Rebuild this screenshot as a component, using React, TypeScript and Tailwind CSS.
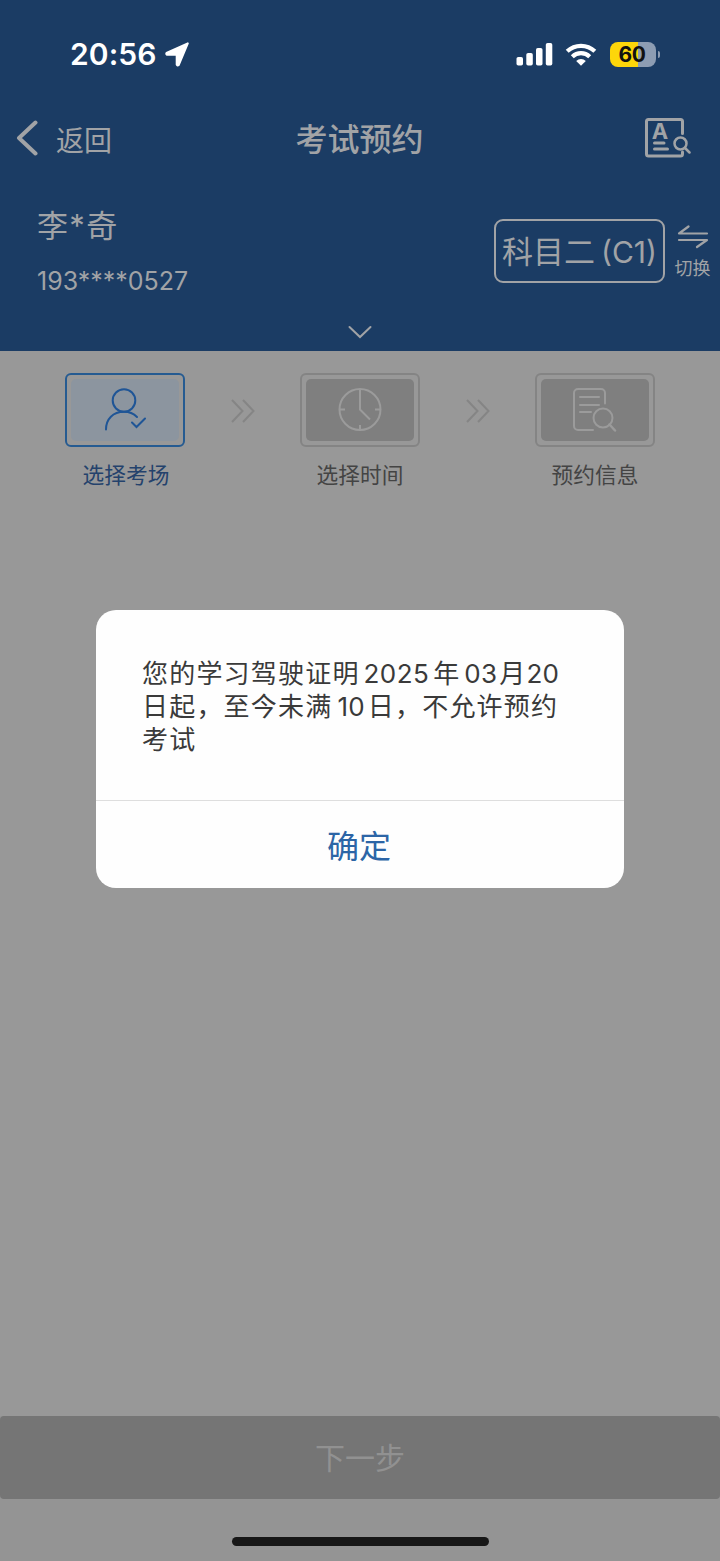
import type { ReactNode } from 'react';

const STEPS = [
  { label: '选择考场', icon: <ExamineeIcon />, active: true },
  { label: '选择时间', icon: <ClockIcon />, active: false },
  { label: '预约信息', icon: <DocSearchIcon />, active: false },
];

function ExamineeIcon() {
  return (
    <svg width="42" height="46" viewBox="0 0 42 46" fill="none" stroke="#1f5596" strokeWidth="2" strokeLinecap="round">
      <circle cx="20" cy="13.5" r="11.3" />
      <path d="M2 42.5C2 32 9 24.8 20 24.8C25 24.8 30 27 33 30" />
      <path d="M28 35.500L32.500 40L41 31.500" />
    </svg>
  );
}

function ClockIcon() {
  return (
    <svg width="44" height="44" viewBox="0 0 44 44" fill="none" stroke="#9b9b9b" strokeWidth="2">
      <circle cx="22" cy="21.5" r="20.5" />
      <path d="M22 1V21.500L32 31.500M22 37V42.500M1.500 21.500H7M37 21.500H42.500" />
    </svg>
  );
}

function DocSearchIcon() {
  return (
    <svg width="44" height="44" viewBox="0 0 44 44" fill="none" stroke="#9b9b9b" strokeWidth="2" strokeLinecap="round">
      <path d="M20 42H5A4 4 0 0 1 1 38V5A4 4 0 0 1 5 1H28A4 4 0 0 1 32 5V15.500" />
      <path d="M7 9H26M7 17H26M7 24H18" />
      <circle cx="30" cy="30" r="9.500" />
      <path d="M36.500 36.500L42 42.500" strokeWidth="2.500" />
    </svg>
  );
}

function StatusBar() {
  return (
    <div className="flex h-[108px] items-center justify-between pl-[70px] pr-[60px]">
      <div className="flex items-center gap-[8px] text-white">
        <span className="text-[30px] font-semibold leading-none tracking-[0.100px]">20:56</span>
        <svg width="25" height="25" viewBox="0 0 25 25" fill="#fff" stroke="#fff" strokeWidth="2" strokeLinejoin="round">
          <path d="M22.800 1.300L1.500 11Q.8 12.200 2 12.800H11.700V22.500Q12.500 24.200 13.700 23Z" />
        </svg>
      </div>
      <div className="flex items-center">
        <svg width="37" height="24" viewBox="0 0 37 24" fill="#fff">
          <rect x="0.500" y="15" width="6.500" height="8.500" rx="1.800" />
          <rect x="10.300" y="11" width="6.500" height="12.500" rx="1.800" />
          <rect x="20" y="6" width="6.500" height="17.500" rx="1.800" />
          <rect x="29.800" y="1" width="6.500" height="22.500" rx="1.800" />
        </svg>
        <svg className="ml-[12px]" width="32" height="24" viewBox="0 0 32 24" fill="none" stroke="#fff" strokeWidth="4.200">
          <path d="M2.200 9.300A20 20 0 0 1 29.800 9.300" />
          <path d="M7.300 14.700A12.500 12.500 0 0 1 24.700 14.700" />
          <path d="M11.200 19L16 23.700L20.800 19A7 7 0 0 0 11.200 19Z" fill="#fff" stroke="none" />
        </svg>
        <div className="ml-[13px] flex h-[25px] w-[46px] items-center justify-center rounded-[8px] bg-[linear-gradient(to_right,#fdd60a_60%,#8d9db3_60%)] pr-[2px] text-[21px] font-bold leading-none tracking-[-0.500px] text-[#111]">
          60
        </div>
        <div className="ml-[1.500px] h-[7px] w-[2.500px] rounded-r-full bg-[#8d9db3]" />
      </div>
    </div>
  );
}

function NavBar() {
  return (
    <div className="grid h-[60px] grid-cols-3 items-center pl-[16px] pr-[29px] text-[#a1a3a6]">
      <button className="flex items-center gap-[17px] text-left">
        <svg width="23" height="36" viewBox="0 0 23 36" fill="none" stroke="currentColor" strokeWidth="4" strokeLinecap="round" strokeLinejoin="round">
          <path d="M19.500 2.500L3 18L19.500 33.500" />
        </svg>
        <span className="pt-[5px] text-[28px] leading-none">返回</span>
      </button>
      <h1 className="pl-[12px] pt-[3px] text-center text-[32px] font-medium leading-none">考试预约</h1>
      <svg className="justify-self-end" width="47" height="42" viewBox="0 0 47 42" fill="none" stroke="currentColor" strokeWidth="3" strokeLinecap="round" strokeLinejoin="round">
        <path d="M38.500 16.500V4.500Q38.500 2.500 36.500 2.500H4.500Q2.500 2.500 2.500 4.500V37Q2.500 39 4.500 39H36.500Q38.500 39 38.500 37V35" />
        <text x="16" y="21.500" textAnchor="middle" fill="currentColor" stroke="none" fontSize="22" fontWeight="700">A</text>
        <path d="M10.500 26H20M10.500 32H23.500" />
        <circle cx="36.500" cy="26.500" r="6" strokeWidth="2.500" />
        <path d="M41 31L45.500 35.500" strokeWidth="2.500" />
      </svg>
    </div>
  );
}

function Profile() {
  return (
    <div className="flex h-[183px] flex-col justify-between pb-[12px] text-[#a1a3a6]">
      <div className="flex justify-between pl-[37px] pr-[9px]">
        <div className="pt-[41px]">
          <div className="text-[31px] leading-[34px] tracking-[1.300px]">李*奇</div>
          <div className="mt-[23px] text-[25px] leading-[30px]">193****0527</div>
        </div>
        <div className="flex pt-[51px]">
          <div className="flex h-[64px] w-[171px] items-center justify-center whitespace-nowrap rounded-[9px] border-2 border-[#a1a3a6] pt-[3px] text-[31px]">
            科目二<span className="ml-[6px] text-[30px]">(C1)</span>
          </div>
          <button className="ml-[9px] flex w-[37px] flex-col items-center pt-[6px]">
            <svg width="32" height="24" viewBox="0 0 32 24" fill="none" stroke="currentColor" strokeWidth="2.200" strokeLinecap="round" strokeLinejoin="round">
              <path d="M30 8.500H2L11.500 1.500M2 15H30L20 22" />
            </svg>
            <span className="mt-[10px] whitespace-nowrap text-[18px] leading-[20px]">切换</span>
          </button>
        </div>
      </div>
      <svg className="self-center" width="24" height="14" viewBox="0 0 24 14" fill="none" stroke="currentColor" strokeWidth="2" strokeLinecap="round">
        <path d="M1.500 2L12 12L22.500 2" />
      </svg>
    </div>
  );
}

function Step({ label, icon, active }: { label: string; icon: ReactNode; active: boolean }) {
  return (
    <div className="flex w-[120px] flex-col items-center">
      <div className={`h-[74px] w-[120px] rounded-[6px] border-2 p-[4px] ${active ? 'border-[#265b91]' : 'border-[#848484]'}`}>
        <div className={`flex h-full items-center justify-center rounded-[5px] ${active ? 'bg-[#8c959f]' : 'bg-[#7f7f7f]'}`}>{icon}</div>
      </div>
      <span className={`mt-[15px] whitespace-nowrap text-[21.700px] leading-[26px] ${active ? 'pl-[2px] text-[#24426c]' : 'text-[#444]'}`}>{label}</span>
    </div>
  );
}

function StepArrow() {
  return (
    <svg className="mt-[26px]" width="24" height="24" viewBox="0 0 24 24" fill="none" stroke="#858585" strokeWidth="2">
      <path d="M1 1L11.500 12L1 23M12 1L22.500 12L12 23" />
    </svg>
  );
}

function NoticeDialog() {
  return (
    <div role="dialog" className="absolute inset-0 z-10 pt-[610px]">
      <div className="ml-[96px] flex h-[278px] w-[528px] flex-col overflow-hidden rounded-[20px] bg-[#fefefe]">
        <p className="h-[190px] whitespace-nowrap pl-[46px] pt-[47px] text-[26px] leading-[33px] tracking-[1.200px] text-[#3a3a3a]">
          您的学习驾驶证明<span className="ml-[4px] mr-[4px] tracking-[0.400px]">2025</span>年<span className="ml-[4px] mr-[2px] tracking-[0.200px]">03</span>月<span className="tracking-[0.200px]">20</span>
          <br />
          日起，至今未满<span className="ml-[5px] mr-[3px] tracking-[0.200px]">10</span>日，不允许预约
          <br />
          考试
        </p>
        <button className="flex-1 border-t border-[#dedede] pr-[2px] pt-[4px] text-[32px] leading-none text-[#2c65a6]">确定</button>
      </div>
    </div>
  );
}

export default function App() {
  return (
    <div className="relative flex h-[1561px] w-[720px] flex-col overflow-hidden bg-[#989898] font-[Inter,'Noto_Sans_CJK_SC',sans-serif]" lang="zh-CN">
      <header className="h-[351px] bg-[#1b3c64]">
        <StatusBar />
        <NavBar />
        <Profile />
      </header>

      <main className="flex flex-1 items-start justify-between px-[65px] pt-[22px]">
        <Step {...STEPS[0]} />
        <StepArrow />
        <Step {...STEPS[1]} />
        <StepArrow />
        <Step {...STEPS[2]} />
      </main>

      <footer className="flex h-[145px] flex-col items-center bg-[#949494]">
        <button className="h-[83px] w-full rounded-[4px] bg-[#757575] pt-[2px] text-[30px] text-[#919191]">下一步</button>
        <div className="mt-[38px] h-[9px] w-[257px] rounded-full bg-[#171717]" />
      </footer>

      <NoticeDialog />
    </div>
  );
}
